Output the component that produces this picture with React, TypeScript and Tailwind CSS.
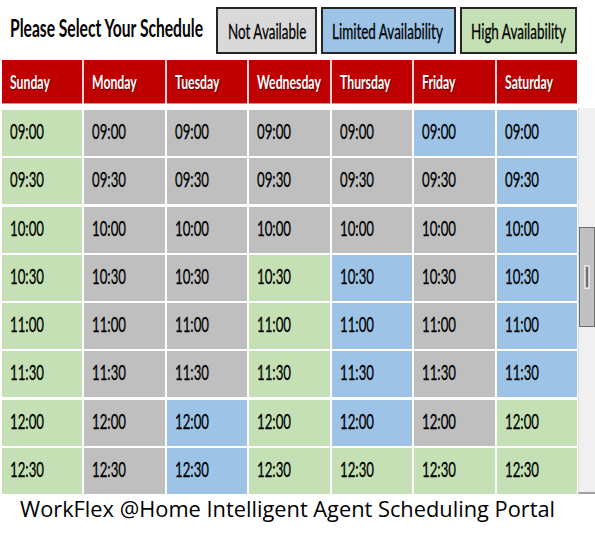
import React from "react";

type C = "g" | "y" | "b";

const days = ["Sunday", "Monday", "Tuesday", "Wednesday", "Thursday", "Friday", "Saturday"];
const rows: { t: string; c: C[] }[] = [
  { t: "09:00", c: ["g", "y", "y", "y", "y", "b", "b"] },
  { t: "09:30", c: ["g", "y", "y", "y", "y", "y", "b"] },
  { t: "10:00", c: ["g", "y", "y", "y", "y", "y", "b"] },
  { t: "10:30", c: ["g", "y", "y", "g", "b", "y", "b"] },
  { t: "11:00", c: ["g", "y", "y", "g", "b", "y", "b"] },
  { t: "11:30", c: ["g", "y", "y", "g", "b", "y", "b"] },
  { t: "12:00", c: ["g", "y", "b", "g", "b", "y", "g"] },
  { t: "12:30", c: ["g", "y", "b", "g", "g", "g", "g"] },
];

const bg: Record<C, string> = {
  g: "bg-[#c5e0b4]",
  y: "bg-[#bfbfbf]",
  b: "bg-[#9dc3e6]",
};

const FONT = "font-['Lato','Liberation_Sans',sans-serif]";

export default function App() {
  return (
    <div className={`w-[595px] h-[541px] bg-white overflow-hidden ${FONT}`}>
      {/* top bar */}
      <div className="flex items-center pt-[7px] h-[54px]">
        <div className="w-[216px] pl-[10px] pb-[4px] whitespace-nowrap">
          <span className="inline-block origin-left scale-x-[0.625] text-[25px] font-bold text-black leading-none">
            Please Select Your Schedule
          </span>
        </div>
        <div className="w-[101px] h-[47px] border-2 border-[#262626] bg-[#d9d9d9] flex items-center pl-[10px] whitespace-nowrap">
          <span className="inline-block origin-left scale-x-[0.64] text-[21px] text-black leading-none [-webkit-text-stroke:0.3px_black]">Not Available</span>
        </div>
        <div className="ml-[4px] w-[135px] h-[47px] border-2 border-[#262626] bg-[#9dc3e6] flex items-center pl-[9px] whitespace-nowrap">
          <span className="inline-block origin-left scale-x-[0.64] text-[21px] text-black leading-none [-webkit-text-stroke:0.3px_black]">Limited Availability</span>
        </div>
        <div className="ml-[4px] w-[117px] h-[47px] border-2 border-[#262626] bg-[#c5e0b4] flex items-center pl-[9px] whitespace-nowrap">
          <span className="inline-block origin-left scale-x-[0.64] text-[21px] text-black leading-none [-webkit-text-stroke:0.3px_black]">High Availability</span>
        </div>
      </div>

      {/* header */}
      <div className="mt-[6px] ml-[2px] w-[575px] grid grid-cols-7 gap-x-[2px] bg-[#f3d6d6]">
        {days.map((d) => (
          <div key={d} className="h-[44px] bg-[#c00000] flex items-center pl-[8px] whitespace-nowrap border-b border-[#e08a8a]">
            <span className="inline-block origin-left scale-x-[0.68] text-[18px] font-bold text-white leading-none [text-shadow:1px_1px_1px_rgba(0,0,0,0.55)]">
              {d}
            </span>
          </div>
        ))}
      </div>

      {/* body */}
      <div className="mt-[4px] flex">
        <div className="pt-[2px] ml-[2px] w-[575px] grid grid-cols-7 gap-[2px]">
          {rows.map((r) =>
            r.c.map((c, i) => (
              <div key={r.t + i} className={`h-[46px] ${bg[c]} flex items-center pl-[8px] pb-[5px] whitespace-nowrap`}>
                <span className="inline-block origin-left scale-x-[0.63] text-[21px] text-black leading-none [-webkit-text-stroke:0.3px_black]">{r.t}</span>
              </div>
            ))
          )}
        </div>
        <div className="ml-[1px] w-[17px] h-[386px] bg-[#f0f0f0] border-l border-[#dcdcdc] border-b-2 border-b-[#a0a0a0] pt-[119px]">
          <div className="h-[100px] w-full bg-[#c0c0c0] border border-[#6f6f6f] flex items-center justify-center">
            <div className="w-[6px] h-[24px] border border-[#e6e6e6] bg-[#707070] [box-shadow:inset_0_0_0_1px_#c8c8c8]" />
          </div>
        </div>
      </div>

      {/* footer */}
      <div className="pl-[20px] font-['Open_Sans',sans-serif] text-[21.8px] leading-[30px] text-black whitespace-nowrap">
        WorkFlex @Home Intelligent Agent Scheduling Portal
      </div>
    </div>
  );
}
